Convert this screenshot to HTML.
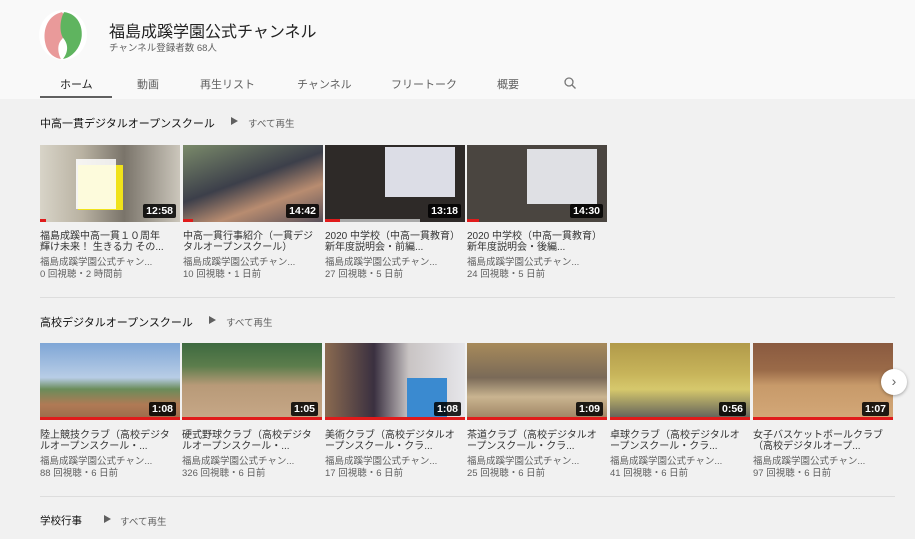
<!DOCTYPE html><html><head><meta charset="utf-8"><style>
*{margin:0;padding:0;box-sizing:border-box}
body{width:915px;height:539px;overflow:hidden;background:#f1f1f1;font-family:"Liberation Sans","Noto Sans CJK JP",sans-serif;position:relative;color:#030303}
.hdr{position:absolute;left:0;top:0;width:915px;height:99px;background:#f9f9f9}
.a{position:absolute}
.tab{position:absolute;top:76px;font-size:11px;color:#606060}
.th{position:absolute;width:140px;height:77px;overflow:hidden}
.dur{position:absolute;right:4px;bottom:4px;background:rgba(0,0,0,.85);color:#fff;font-size:10.5px;font-weight:bold;padding:1px 3px;border-radius:2px}
.bar{position:absolute;left:0;bottom:0;height:3px;background:#e01b1b}
.t{position:absolute;width:132px;font-size:10px;line-height:11px;color:#333}
.m{position:absolute;font-size:9.5px;color:#606060;line-height:12px;width:140px;white-space:nowrap}
.sec{position:absolute;font-size:11px;color:#111}
.pa{position:absolute;font-size:9.5px;color:#606060}
.hr{position:absolute;left:40px;width:855px;height:1px;background:#ddd}
</style></head><body>
<div class="hdr"></div>
<svg class="a" style="left:36px;top:9px" width="54" height="52" viewBox="0 0 50 50"><ellipse cx="25" cy="25" rx="23" ry="24" fill="#fff"/><path d="M24 3C11 6 5 19 8 33c2 9 8 14 15 15-3-6-4-14 1-19C30 22 30 10 24 3z" fill="#e99a9a"/><path d="M26 3c11 1 18 11 17 23-1 12-10 21-18 22 4-5 6-12 1-19-5-6-4-19 0-26z" fill="#5fb45f"/></svg>
<div class="a" style="left:109px;top:18px;font-size:16px;color:#222">福島成蹊学園公式チャンネル</div>
<div class="a" style="left:109px;top:40px;font-size:9.5px;color:#606060">チャンネル登録者数 68人</div>
<div class="tab" style="left:60px;color:#222">ホーム</div>
<div class="a" style="left:40px;top:96px;width:72px;height:2px;background:#606060"></div>
<div class="tab" style="left:137px">動画</div>
<div class="tab" style="left:200px">再生リスト</div>
<div class="tab" style="left:297px">チャンネル</div>
<div class="tab" style="left:391px">フリートーク</div>
<div class="tab" style="left:497px">概要</div>
<svg class="a" style="left:564px;top:77px" width="12" height="12"><circle cx="5" cy="5" r="4" fill="none" stroke="#777" stroke-width="1.3"/><path d="M8 8l3.5 3.5" stroke="#777" stroke-width="1.3"/></svg>

<div class="sec" style="left:40px;top:115px">中高一貫デジタルオープンスクール</div>
<div class="a" style="left:231px;top:117px;width:0;height:0;border-left:7px solid #606060;border-top:4.5px solid transparent;border-bottom:4.5px solid transparent"></div>
<div class="pa" style="left:248px;top:116px">すべて再生</div>

<div class="th" style="left:40px;top:145px;background:linear-gradient(90deg,#d8d4c8 0,#b9b2a2 30%,#7a746a 60%,#cbc6bb 100%)"><div class="a" style="left:38px;top:20px;width:45px;height:45px;background:#f0e21a"></div><div class="a" style="left:36px;top:14px;width:40px;height:50px;background:#fff;opacity:.85"></div><div class="bar" style="width:6px"></div><div class="dur">12:58</div></div>
<div class="th" style="left:183px;top:145px;background:linear-gradient(160deg,#7a8a6a,#3c3f4a 45%,#b88c70 70%,#59505a)"><div class="bar" style="width:10px"></div><div class="dur">14:42</div></div>
<div class="th" style="left:325px;top:145px;background:#2e2a28"><div class="a" style="left:60px;top:2px;width:70px;height:50px;background:#dcdde6"></div><div class="bar" style="width:15px"></div><div class="a" style="left:15px;bottom:0;width:80px;height:3px;background:#aaa"></div><div class="dur">13:18</div></div>
<div class="th" style="left:467px;top:145px;background:#4a4540"><div class="a" style="left:60px;top:4px;width:70px;height:55px;background:#dfe0e4"></div><div class="bar" style="width:12px"></div><div class="dur">14:30</div></div>

<div class="t" style="left:40px;top:231px">福島成蹊中高一貫１０周年 輝け未来！ 生きる力 その...</div>
<div class="t" style="left:183px;top:231px">中高一貫行事紹介（一貫デジタルオープンスクール）</div>
<div class="t" style="left:325px;top:231px">2020 中学校（中高一貫教育）新年度説明会・前編...</div>
<div class="t" style="left:467px;top:231px">2020 中学校（中高一貫教育）新年度説明会・後編...</div>
<div class="m" style="left:40px;top:257px">福島成蹊学園公式チャン...<br>0 回視聴・2 時間前</div>
<div class="m" style="left:183px;top:257px">福島成蹊学園公式チャン...<br>10 回視聴・1 日前</div>
<div class="m" style="left:325px;top:257px">福島成蹊学園公式チャン...<br>27 回視聴・5 日前</div>
<div class="m" style="left:467px;top:257px">福島成蹊学園公式チャン...<br>24 回視聴・5 日前</div>
<div class="hr" style="top:297px"></div>

<div class="sec" style="left:40px;top:314px">高校デジタルオープンスクール</div>
<div class="a" style="left:209px;top:316px;width:0;height:0;border-left:7px solid #606060;border-top:4.5px solid transparent;border-bottom:4.5px solid transparent"></div>
<div class="pa" style="left:226px;top:315px">すべて再生</div>

<div class="th" style="left:40px;top:343px;background:linear-gradient(180deg,#7fa6d6 0,#b8cde6 45%,#6a8c5a 60%,#b07a55 80%,#9a6a4a)"><div class="bar" style="width:140px"></div><div class="dur">1:08</div></div>
<div class="th" style="left:182px;top:343px;background:linear-gradient(180deg,#3e6a40 0,#5c7d4c 30%,#b89a78 55%,#c7a888)"><div class="bar" style="width:140px"></div><div class="dur">1:05</div></div>
<div class="th" style="left:325px;top:343px;background:linear-gradient(90deg,#8a6a50,#3a3040 35%,#c9c4c4 60%,#e6e6ea)"><div class="a" style="left:82px;top:35px;width:40px;height:42px;background:#3a8ad0"></div><div class="bar" style="width:140px"></div><div class="dur">1:08</div></div>
<div class="th" style="left:467px;top:343px;background:linear-gradient(180deg,#a78a5a,#7a6a58 45%,#c9b490 70%,#9c8060)"><div class="bar" style="width:140px"></div><div class="dur">1:09</div></div>
<div class="th" style="left:610px;top:343px;background:linear-gradient(180deg,#b19a4a,#c7b45a 40%,#d6c86c 60%,#5a5a5a)"><div class="bar" style="width:140px"></div><div class="dur">0:56</div></div>
<div class="th" style="left:753px;top:343px;background:linear-gradient(180deg,#8a5a40,#9a6a48 35%,#c79a6a 55%,#d4a878)"><div class="bar" style="width:140px"></div><div class="dur">1:07</div></div>
<div class="a" style="left:881px;top:369px;width:26px;height:26px;border-radius:50%;background:#fff;box-shadow:0 1px 3px rgba(0,0,0,.35);color:#666;font-size:14px;text-align:center;line-height:25px">›</div>

<div class="t" style="left:40px;top:430px">陸上競技クラブ（高校デジタルオープンスクール・...</div>
<div class="t" style="left:182px;top:430px">硬式野球クラブ（高校デジタルオープンスクール・...</div>
<div class="t" style="left:325px;top:430px">美術クラブ（高校デジタルオープンスクール・クラ...</div>
<div class="t" style="left:467px;top:430px">茶道クラブ（高校デジタルオープンスクール・クラ...</div>
<div class="t" style="left:610px;top:430px">卓球クラブ（高校デジタルオープンスクール・クラ...</div>
<div class="t" style="left:753px;top:430px">女子バスケットボールクラブ（高校デジタルオープ...</div>
<div class="m" style="left:40px;top:456px">福島成蹊学園公式チャン...<br>88 回視聴・6 日前</div>
<div class="m" style="left:182px;top:456px">福島成蹊学園公式チャン...<br>326 回視聴・6 日前</div>
<div class="m" style="left:325px;top:456px">福島成蹊学園公式チャン...<br>17 回視聴・6 日前</div>
<div class="m" style="left:467px;top:456px">福島成蹊学園公式チャン...<br>25 回視聴・6 日前</div>
<div class="m" style="left:610px;top:456px">福島成蹊学園公式チャン...<br>41 回視聴・6 日前</div>
<div class="m" style="left:753px;top:456px">福島成蹊学園公式チャン...<br>97 回視聴・6 日前</div>
<div class="hr" style="top:496px"></div>

<div class="sec" style="left:40px;top:513px;font-size:10.5px">学校行事</div>
<div class="a" style="left:104px;top:515px;width:0;height:0;border-left:7px solid #606060;border-top:4.5px solid transparent;border-bottom:4.5px solid transparent"></div>
<div class="pa" style="left:120px;top:514px">すべて再生</div>
</body></html>
